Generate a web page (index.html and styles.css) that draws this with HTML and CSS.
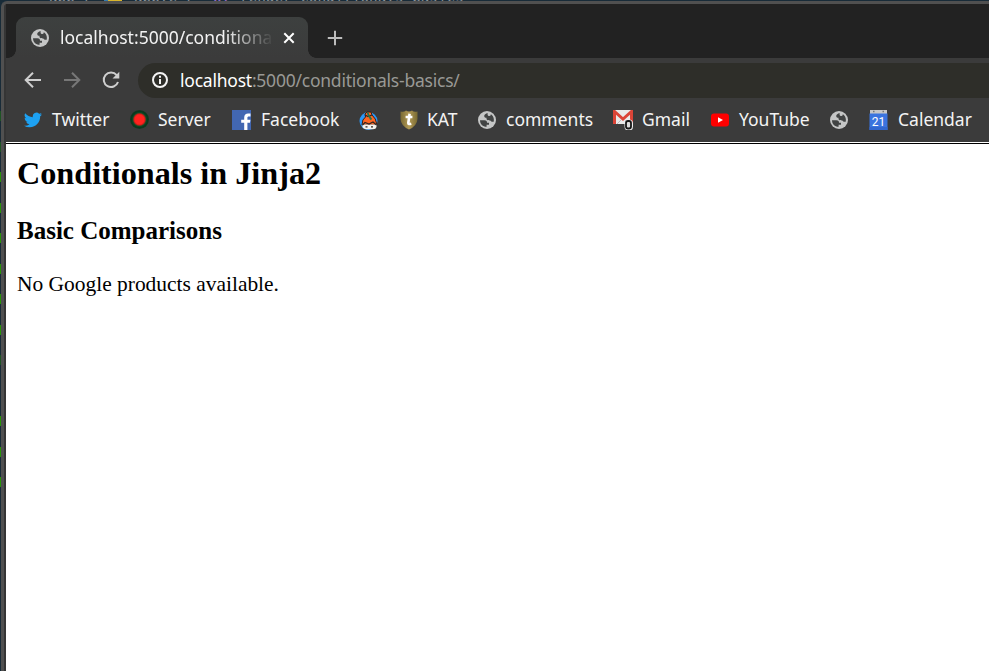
FILE: index.html
```
<!DOCTYPE html>
<html lang="en">
<head>
<meta charset="utf-8">
<title>Conditionals in Jinja2</title>
<link rel="stylesheet" href="styles.css">
</head>
<body>
<svg class="defs" width="0" height="0">
  <symbol id="globe" viewBox="0 0 18 18">
    <circle cx="9" cy="9" r="9" fill="#c5c6c6"/>
    <path d="M2 9.2H6.3C8.6 9.2 9 10.4 9 11.8H11V13.7H8.6V15.8C4.8 15.8 2 13 2 9.2ZM9.6 2.1C7.8 2.6 6.2 3.6 6.2 5.1C6.2 6.5 7.3 6.8 8.5 6.8V8C8.8 9.3 10.6 9.4 12 9.4C13 9.6 13.2 10.7 14.4 10.7H15.7C16.5 7.5 15 4.5 12.8 3.2C12.8 4.8 11.8 5 10.7 5C10 5 9.4 4.3 9.6 2.1Z" fill="#424444"/>
  </symbol>
</svg>
<div class="desktop">
  <div class="backdrop-text"><span class="t1">app /</span><i></i><span class="t2">apple /</span><span class="t3">W:</span><span>render conditionals-basics</span></div>
  <div class="lights"><b></b><b></b><b></b><b></b><b></b><b></b><b></b><b></b><b></b><b></b><b></b><b></b><b></b></div>
  <div class="window">
    <header class="tabs">
      <div class="tab">
        <svg class="globe" width="18" height="18"><use href="#globe"/></svg>
        <span class="tab-title">localhost:5000/conditional</span>
        <svg class="close" width="12" height="12" viewBox="0 0 12 12"><path d="M1.3 1.3L10.7 10.7M10.7 1.3L1.3 10.7"/></svg>
      </div>
      <svg class="plus" width="16" height="16" viewBox="0 0 16 16"><path d="M8 .8V15.2M.8 8H15.2"/></svg>
    </header>
    <nav class="toolbar">
      <svg width="18" height="18" viewBox="0 0 18 18"><path d="M17 9H2M9 1.7L1.7 9L9 16.3"/></svg>
      <svg class="off" width="18" height="18" viewBox="0 0 18 18"><path d="M1 9H16M9 1.7L16.3 9L9 16.3"/></svg>
      <svg width="18" height="18" viewBox="0 0 18 18"><path d="M14.7 4.1A7.3 7.3 0 1 0 16 11"/><path d="M17.3 .8V7.5H10.5Z" class="solid"/></svg>
      <div class="address">
        <svg width="18" height="18" viewBox="0 0 18 18"><circle cx="9" cy="9" r="7"/><path d="M9 8V13M9 4.8V6.8"/></svg>
        <span class="url"><em>localhost</em>:5000/conditionals-basics/</span>
      </div>
    </nav>
    <nav class="bookmarks">
      <a><svg width="18" height="18" viewBox="0 0 24 24"><path fill="#1da1f2" d="M23.95 4.57a10 10 0 0 1-2.82.77 4.96 4.96 0 0 0 2.16-2.72c-.95.55-2 .95-3.13 1.18a4.92 4.92 0 0 0-8.38 4.48C7.69 8.09 4.07 6.13 1.64 3.16a4.92 4.92 0 0 0 1.52 6.57 4.9 4.9 0 0 1-2.23-.61v.06a4.92 4.92 0 0 0 3.95 4.83 5 5 0 0 1-2.21.08 4.94 4.94 0 0 0 4.6 3.42A9.87 9.87 0 0 1 0 19.54a13.99 13.99 0 0 0 7.56 2.21c9.05 0 14-7.5 14-13.98l-.02-.64a9.94 9.94 0 0 0 2.41-2.56z"/></svg><span>Twitter</span></a>
      <a class="tight"><i class="orb"></i><span>Server</span></a>
      <a class="tight"><svg width="20" height="20" viewBox="0 0 20 20"><rect width="19" height="20" fill="#4267b2"/><path d="M12.2 20V12.8H9.2V9.7H12.2V7.4C12.2 4.8 13.8 3.4 16.1 3.4L18.5 3.6V6.4H16.9C15.7 6.4 15.4 7 15.4 7.8V9.7H18.4L18 12.8H15.4V20Z" fill="#fff"/></svg><span>Facebook</span></a>
      <a><svg width="20" height="20" viewBox="0 0 20 20"><circle cx="9.5" cy="11" r="9" fill="#2997f6"/><path d="M3 15Q3 9 6.5 7L6 4L8 2L12 2L13 5Q17 8 18 15Z" fill="#ff6422" stroke="#352019"/><path d="M3.5 14.5H17.5V17Q17 19.2 14 19.2H7Q4 19 3.5 17Z" fill="#f4f2ee"/><path d="M3.5 15L6 12.5L10 14L14 12L17.5 15M6 5L9 6.5L13 5M6.5 16.8H8.5M12 16.8H14" stroke="#302520" stroke-width="1.2" fill="none"/><path d="M8.5 2.5L10 6L12 9M11 8L12.5 9.5" stroke="#21754b" stroke-width="1.8" fill="none"/></svg></a>
      <a class="tight"><svg width="18" height="20" viewBox="0 0 18 20"><defs><linearGradient id="gold"><stop stop-color="#796a34"/><stop offset=".5" stop-color="#b29a56"/><stop offset="1" stop-color="#796a32"/></linearGradient></defs><path d="M.5 1.5Q4 2.5 6 .5Q9 2.4 12 .5Q14 2.5 17.5 1.5V9Q17 16 9 19.5Q1 16 .5 9Z" fill="url(#gold)"/><path d="M9.6 3.8L8.3 13Q8.2 14.6 11.3 13.8M5.6 7H12.4" fill="none" stroke="#fff" stroke-width="2.6"/></svg><span>KAT</span></a>
      <a><svg width="18" height="18"><use href="#globe"/></svg><span>comments</span></a>
      <a class="tight"><svg width="20" height="20" viewBox="0 0 20 20"><path fill="#e9e9e9" d="M0 0H20V14H0Z"/><path d="M1.5 14V1.5L10 9L18.5 1.5V14" fill="none" stroke="#db4437" stroke-width="3"/><path d="M4 14L8 10M12 10L16 14" stroke="#bbb"/><rect x="13" y="11" width="5.5" height="8" rx="2.5" fill="#eee" stroke="#eee" stroke-width="3"/><rect x="13" y="11" width="5" height="7.5" rx="2" fill="#ddd" stroke="#151515" stroke-width="1.8"/></svg><span>Gmail</span></a>
      <a><svg width="18" height="14" viewBox="0 0 18 14"><rect y=".5" width="18" height="13" rx="3" fill="#f00"/><path d="M7 4.2L12 7L7 9.8Z" fill="#fff"/></svg><span>YouTube</span></a>
      <a><svg width="18" height="18"><use href="#globe"/></svg></a>
      <a class="tight"><svg width="19" height="20" viewBox="0 0 19 20"><path d="M1 0H18V4H1Z" fill="#c7c7c7"/><path d="M4 1.5H5.5M13.5 1.5H15" stroke="#777" stroke-width="1.5"/><path d="M.5 3.5H18.5V20H.5Z" fill="#3b74df"/><path d="M.5 17H18.5V20H.5Z" fill="#3267cf"/><text x="9.5" y="15.8" text-anchor="middle" font-family="Roboto" font-size="12" fill="#fff">21</text></svg><span>Calendar</span></a>
    </nav>
    <main>
      <h1>Conditionals in Jinja2</h1>
      <h3>Basic Comparisons</h3>
      <p>No Google products available.</p>
    </main>
  </div>
</div>
</body>
</html>
```
FILE: styles.css
```
* { box-sizing: border-box; }
body { margin: 0; width: 989px; height: 671px; overflow: hidden; }
svg { display: block; flex: none; }
.defs { position: absolute; }
.desktop { position: relative; width: 989px; height: 671px; overflow: hidden; background: #182b38; padding: 1px 0 0 1px; }
.backdrop-text { position: absolute; left: 49px; top: -12px; display: flex; white-space: pre; font: 14.3px/18px "DejaVu Sans Mono", monospace; color: #8a9298; }
.backdrop-text i { width: 18px; height: 14px; background: linear-gradient(90deg, #347bb0 4px, #d9b52c 4px); }
.t1 { width: 55px; }
.t2 { width: 79px; margin-left: 12px; }
.t3 { width: 27px; color: #8f68bd; }
.lights { position: absolute; left: 0; top: 111px; display: flex; flex-direction: column; gap: 20.5px; }
.lights b { width: 1px; height: 10px; background: #279305; }
.lights b:nth-child(1), .lights b:nth-child(2), .lights b:nth-child(9) { opacity: .4; }
.lights b:nth-child(10) { opacity: 0; }
.window { position: relative; height: 670px; width: 988px; padding-left: 2px; border-left: 3px solid #505050; border-top: 3px solid #505050; border-top-left-radius: 6px; background: #353535; font: 17.5px/24px "Noto Sans", sans-serif; color: #f3f3f3; }
.tabs { height: 54px; display: flex; background: #222; padding: 13px 0 0 10px; }
.tab { position: relative; display: flex; align-items: center; width: 292px; height: 41px; padding: 0 13px 0 15px; background: linear-gradient(#3d403f, #3b3b3b); border-radius: 9px 9px 0 0; }
.tab::before, .tab::after { content: ""; position: absolute; bottom: 0; width: 8px; height: 8px; }
.tab::before { left: -8px; background: radial-gradient(circle at 0 0, transparent 7.5px, #3b3b3b 8px); }
.tab::after { right: -8px; background: radial-gradient(circle at 100% 0, transparent 7.5px, #3b3b3b 8px); }
.tab-title { width: 213px; margin: 0 11px; padding-bottom: 1px; overflow: hidden; white-space: nowrap; -webkit-mask: linear-gradient(90deg, #000 78%, transparent 101%); mask: linear-gradient(90deg, #000 78%, transparent 101%); }
.close { stroke: #fff; stroke-width: 2; }
.plus { margin: 13px 0 0 19px; stroke: #bcbcbc; stroke-width: 2; }
.toolbar { height: 43px; background: #3b3b3b; display: flex; align-items: center; gap: 21px; padding-left: 18px; fill: none; stroke: #cfcfcf; stroke-width: 2; }
.off { stroke: #777; }
.solid { fill: #cfcfcf; stroke: none; }
.address { display: flex; align-items: center; flex: 1; height: 35px; margin: 1px 0 0 -3px; padding-left: 13px; border-radius: 18px 0 0 18px; background: #2e2e29; stroke: #f4f4f4; }
.url { margin-left: 11px; padding-bottom: 1px; letter-spacing: -.23px; color: #999995; white-space: nowrap; }
.url em { font-style: normal; color: #fff; }
.bookmarks { display: grid; grid-template-columns: 106px 102px 127px 41px 78px 135px 98px 119px 39px 120px; height: 41px; padding-left: 18px; background: #3b3b3b; }
.bookmarks a { display: flex; align-items: center; gap: 10px; height: 37px; white-space: nowrap; }
.bookmarks .tight { gap: 9px; }
.bookmarks span { padding-bottom: 2px; }
.bookmarks a:last-child { gap: 10px; }
.orb { width: 19px; height: 19px; border-radius: 50%; background: radial-gradient(circle, #ff231e 0 4.5px, #cf2019 5.5px, #0b4c27 6.8px, #0a361c 8px, #153b25 10px); }
main { height: 529px; background: #fff; border-top: 1px solid #fff; color: #000; font-family: "Liberation Serif", serif; padding: 0 11px; }
main::before { content: ""; display: block; height: 1px; margin: 0 -11px; background: #000; }
h1 { margin: 9px 0 0; font-size: 32.2px; line-height: 40px; }
h3 { margin: 22px 0 0; font-size: 25px; line-height: 32px; }
p { margin: 23px 0 0; font-size: 21.45px; line-height: 28px; }
```
